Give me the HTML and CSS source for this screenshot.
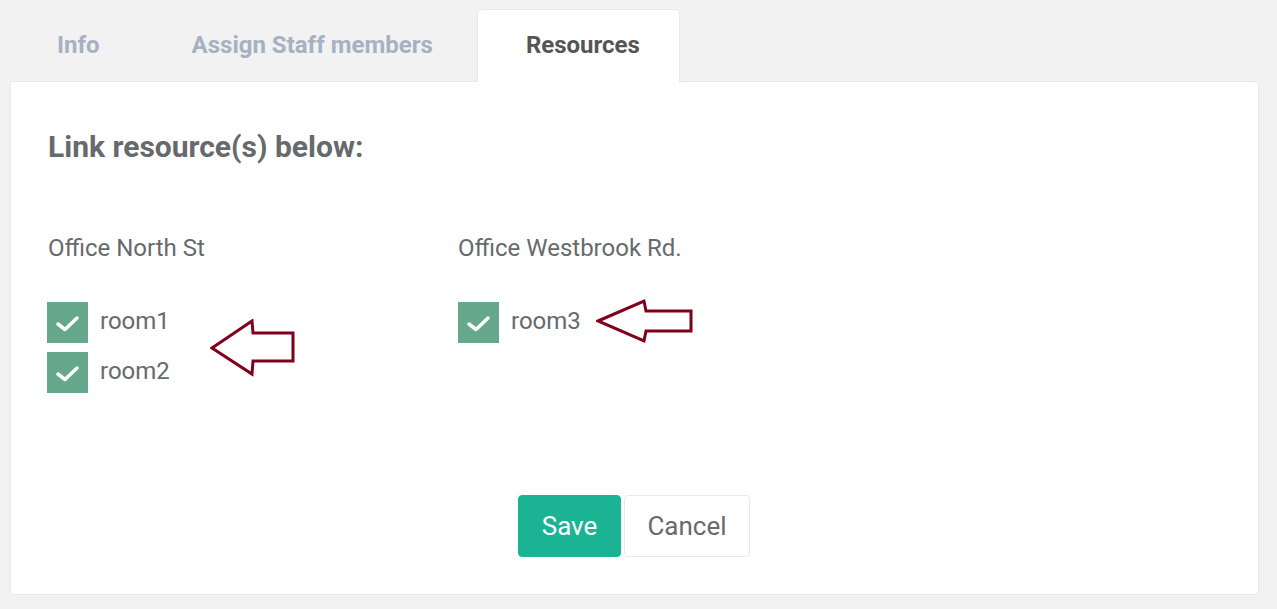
FILE: index.html
```html
<!DOCTYPE html>
<html>
<head>
<meta charset="utf-8">
<link rel="stylesheet" href="styles.css">
</head>
<body>
<div class="page">
  <div class="tabs">
    <div class="tab tab-info">Info</div>
    <div class="tab tab-staff">Assign Staff members</div>
    <div class="tab active">Resources</div>
  </div>
  <div class="panel">
    <h2 class="heading">Link resource(s) below:</h2>
    <div class="columns">
      <div class="col">
        <div class="office">Office North St</div>
        <div class="rooms">
          <label class="room"><span class="check"><svg width="41" height="41" viewBox="0 0 41 41"><polyline points="11,22 18,27.5 30,16" fill="none" stroke="#fff" stroke-width="3.5" stroke-linecap="round" stroke-linejoin="round"/></svg></span>room1</label>
          <label class="room"><span class="check"><svg width="41" height="41" viewBox="0 0 41 41"><polyline points="11,22 18,27.5 30,16" fill="none" stroke="#fff" stroke-width="3.5" stroke-linecap="round" stroke-linejoin="round"/></svg></span>room2</label>
        </div>
      </div>
      <div class="col col-second">
        <div class="office">Office Westbrook Rd.</div>
        <div class="rooms">
          <label class="room"><span class="check"><svg width="41" height="41" viewBox="0 0 41 41"><polyline points="11,22 18,27.5 30,16" fill="none" stroke="#fff" stroke-width="3.5" stroke-linecap="round" stroke-linejoin="round"/></svg></span>room3</label>
        </div>
      </div>
    </div>
    <div class="actions">
      <button class="btn btn-save">Save</button>
      <button class="btn btn-cancel">Cancel</button>
    </div>
    <svg class="arrow arrow-1" width="90" height="60" viewBox="0 0 90 60"><polygon points="2,29 42,2 43,14 83,14 83,42 43,42 42,55" fill="none" stroke="#80001c" stroke-width="3" stroke-linejoin="miter"/></svg>
    <svg class="arrow arrow-2" width="100" height="46" viewBox="0 0 100 46"><polygon points="2,23 48,3 50,13 95,13 95,33 50,33 48,43" fill="none" stroke="#80001c" stroke-width="3" stroke-linejoin="miter"/></svg>
  </div>
</div>
</body>
</html>
```

FILE: styles.css
```css
html, body {
  margin: 0;
  padding: 0;
  background: #f2f2f2;
  font-family: Roboto, "Liberation Sans", Arial, sans-serif;
  color: #676a6c;
}

.page {
  padding: 9px 18px 0 10px;
}

.tabs {
  display: flex;
  height: 72px;
  position: relative;
  z-index: 1;
}

.tab {
  font-size: 24px;
  font-weight: 700;
  color: #a7b1c2;
  line-height: 71px;
  border: 1px solid transparent;
  border-bottom: none;
  border-radius: 5px 5px 0 0;
  margin-bottom: -1px;
  height: 72px;
  box-sizing: content-box;
}

.tab-info {
  padding: 0 45px 0 46px;
}

.tab-staff {
  padding: 0 45px 0 45px;
}

.tab.active {
  background: #fff;
  color: #555;
  border-color: #e7eaec;
  padding: 0 39px 0 48px;
  margin-left: -2px;
}

.panel {
  position: relative;
  background: #fff;
  border: 1px solid #e7eaec;
  border-radius: 0 4px 4px 4px;
  padding: 48px 38px 37px 37px;
}

.heading {
  margin: 0;
  font-size: 30px;
  line-height: 34px;
  font-weight: 700;
  color: #676a6c;
}

.columns {
  display: flex;
  margin-top: 72px;
  height: 156px;
}

.col {
  width: 410px;
}

.office {
  font-size: 24px;
  line-height: 24px;
  color: #676a6c;
}

.rooms {
  display: flex;
  flex-direction: column;
  gap: 9px;
  margin-top: 40px;
}

.room {
  display: flex;
  align-items: center;
  gap: 12px;
  font-size: 24px;
  line-height: 26px;
  color: #676a6c;
  margin-left: -1px;
}

.col-second .room {
  margin-left: 0;
}

.check {
  display: block;
  width: 41px;
  height: 41px;
  background: #66a88b;
  margin-top: 2px;
  margin-bottom: -2px;
}

.check svg {
  display: block;
}

.actions {
  display: flex;
  justify-content: center;
  gap: 3px;
  margin-top: 103px;
}

.btn {
  font-family: Roboto, "Liberation Sans", Arial, sans-serif;
  font-size: 26px;
  height: 62px;
  border-radius: 4px;
  cursor: pointer;
}

.btn-save {
  background: #1ab394;
  border: 1px solid #1ab394;
  color: #fff;
  width: 103px;
}

.btn-cancel {
  background: #fff;
  border: 1px solid #e7eaec;
  color: #676a6c;
  width: 126px;
}

.arrow {
  position: absolute;
  display: block;
}

.arrow-1 {
  left: 199px;
  top: 237px;
}

.arrow-2 {
  left: 585px;
  top: 216px;
}
```
